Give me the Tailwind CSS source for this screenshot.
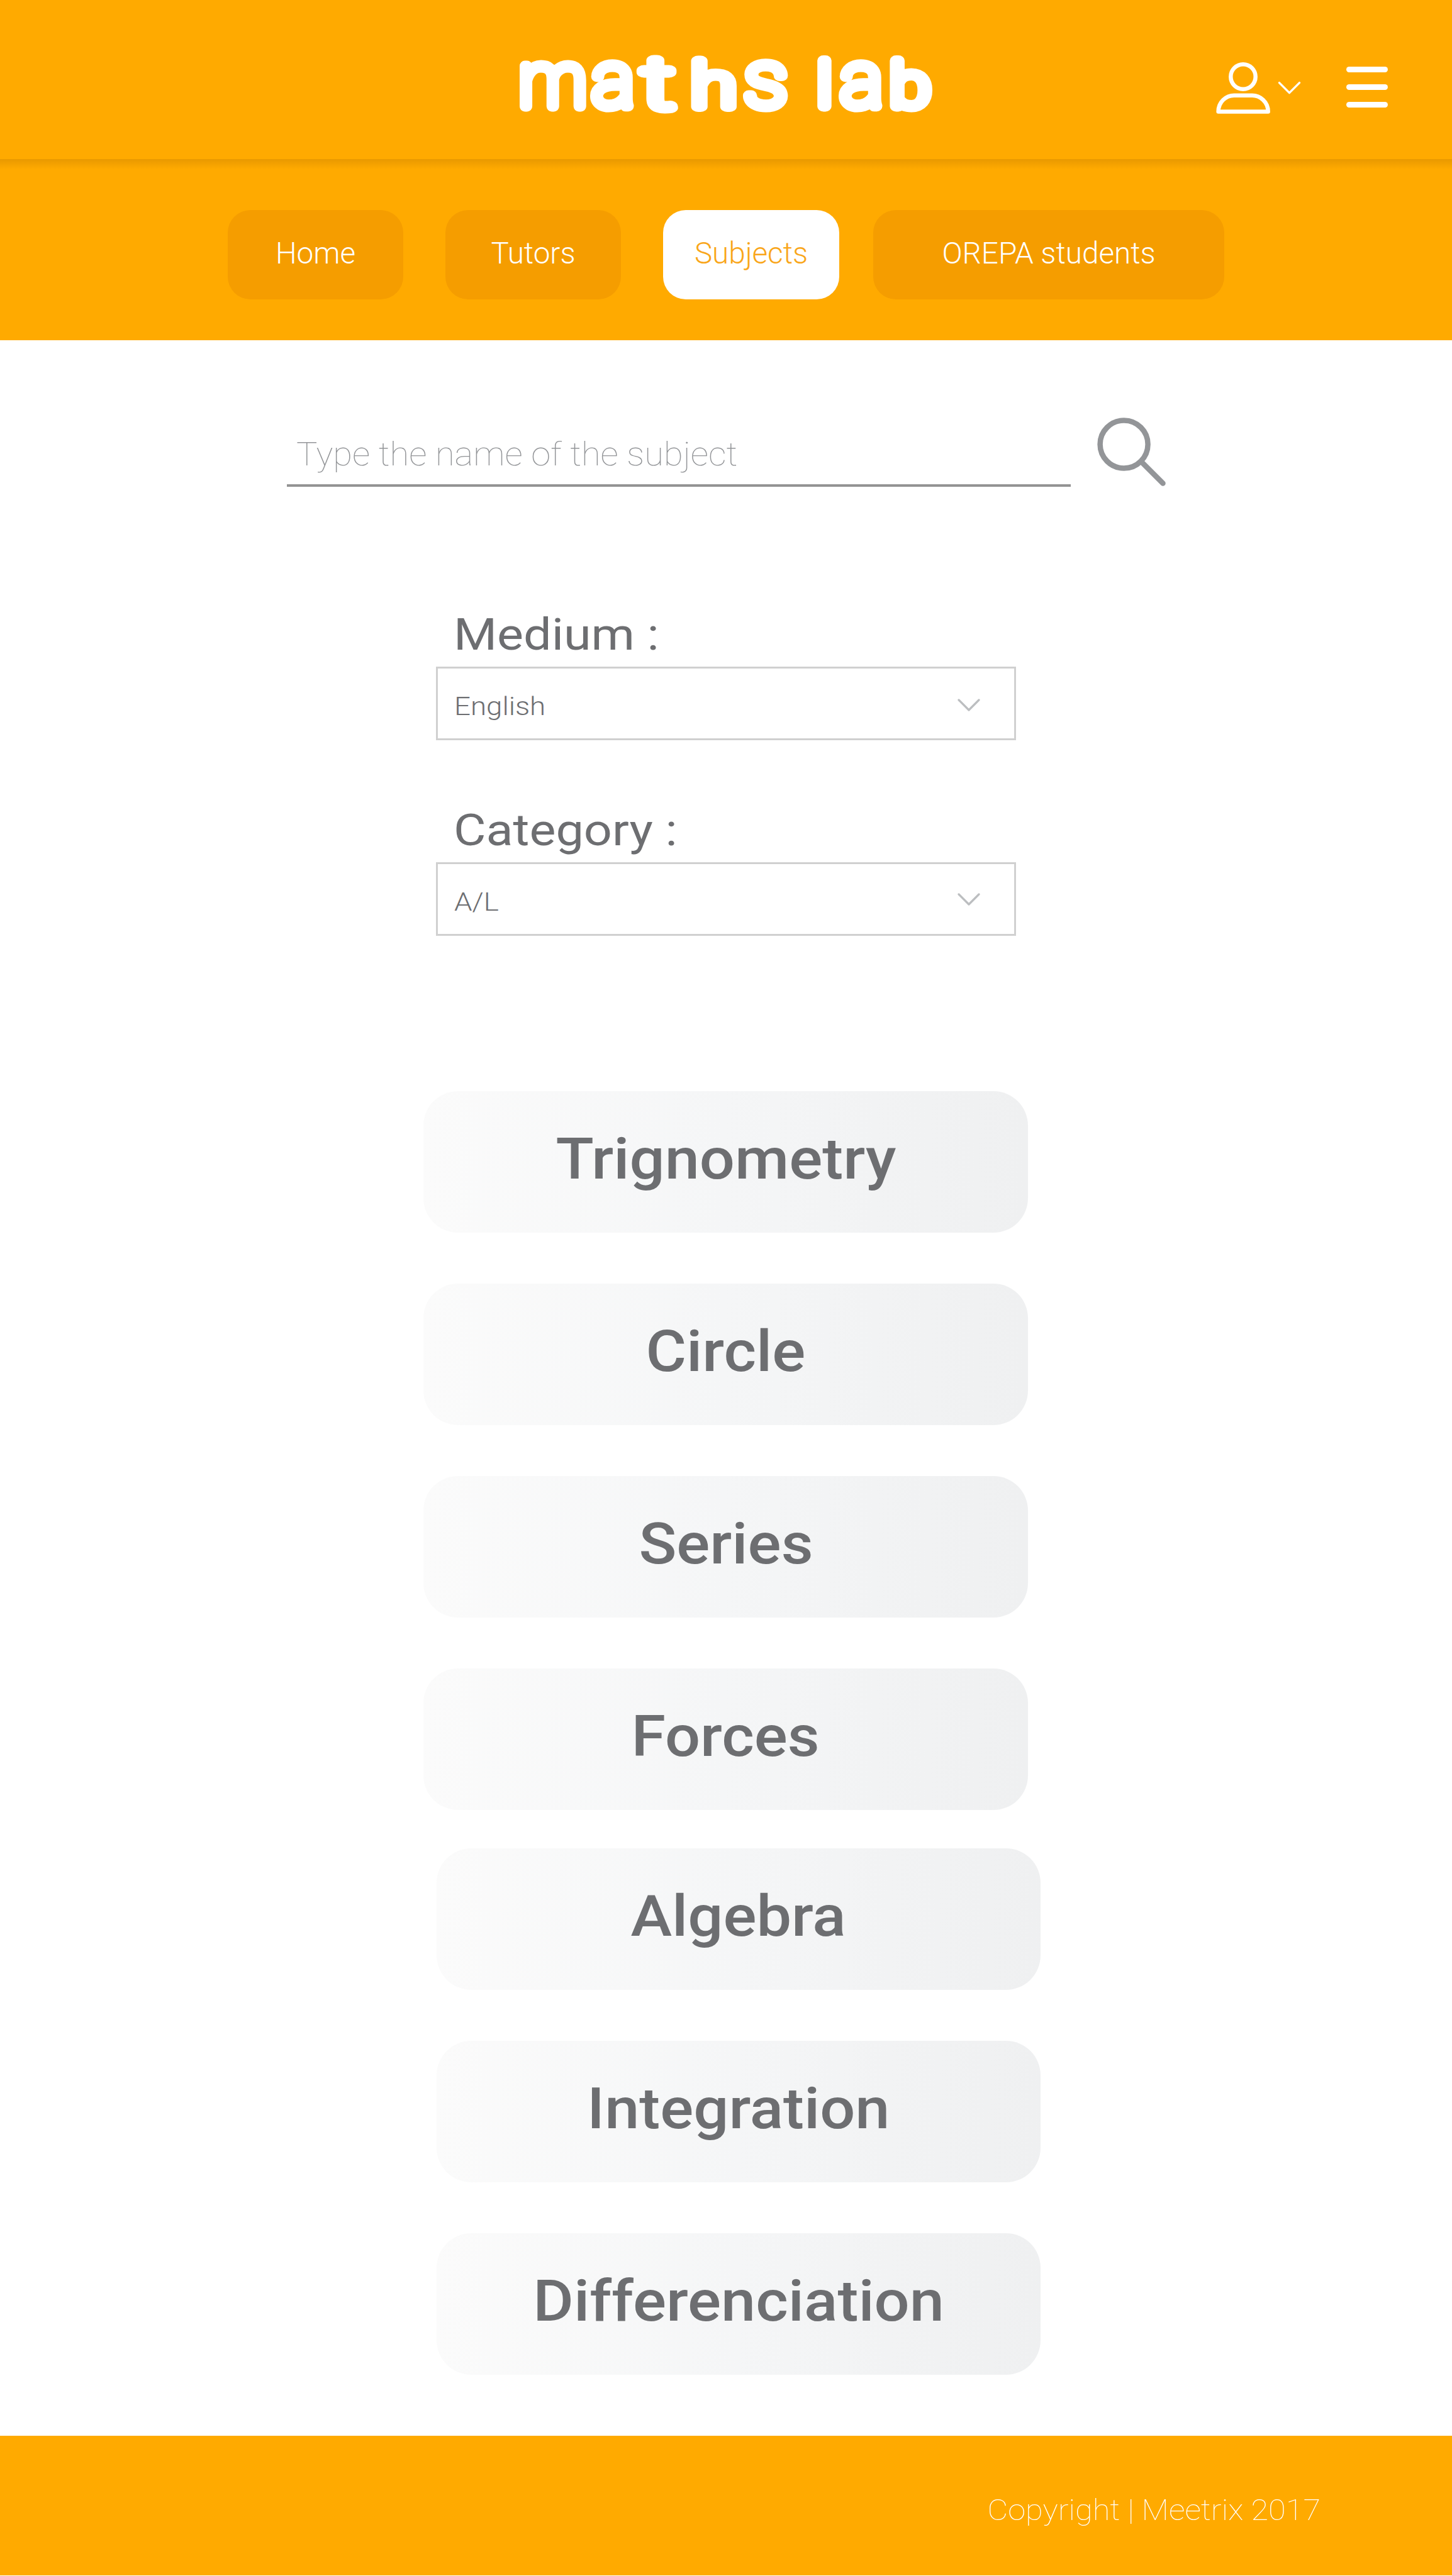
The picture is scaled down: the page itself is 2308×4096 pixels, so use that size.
<!DOCTYPE html>
<html lang="en">
<head>
<meta charset="utf-8">
<title>maths lab</title>
<script src="https://cdn.jsdelivr.net/npm/@tailwindcss/browser@4"></script>
</head>
<body class="bg-white font-['Roboto',sans-serif] text-[#6d6e71]">
<div class="flex h-[4096px] w-[2308px] flex-col overflow-hidden">
  <header class="flex h-[253px] shrink-0 items-start bg-[#ffaa00]">
    <svg class="ml-[816px] h-[253px] w-[690px] overflow-visible" viewBox="816 0 690 253" role="img" aria-label="maths lab">
      <g fill="#fff" stroke="#fff" stroke-width="17" stroke-linejoin="round" stroke-linecap="round" font-family="Roboto" font-weight="100">
        <text transform="translate(825 169) scale(.99 1)" font-size="121">m</text>
        <text transform="translate(941 169) scale(1.03 1)" font-size="123">a</text>
        <text transform="translate(1021 171) scale(1.43 1)" font-size="112">t</text>
        <text transform="translate(1099 170) scale(1.34 1)" font-size="97">h</text>
        <text transform="translate(1183 169) scale(1.1 1)" font-size="125">s</text>
        <text transform="translate(1299 169) scale(1.15 1)" font-size="96">l</text>
        <text transform="translate(1336 169) scale(1.03 1)" font-size="123">a</text>
        <text transform="translate(1415 169) scale(1.2 1)" font-size="97">b</text>
      </g>
    </svg>
    <svg class="ml-[425px] mt-[97px] h-[86px] w-[90px]" viewBox="1931 97 90 86" fill="none" stroke="#fff" stroke-width="6.5" stroke-linejoin="round">
      <circle cx="1976" cy="122" r="19.7"/>
      <path d="M1936.6 177.5C1936.6 162 1949 151.7 1961.500 151.700H1990.500C2003 151.700 2015.700 162 2015.700 177.500Z"/>
    </svg>
    <svg class="ml-[8px] mt-[127px] h-[26px] w-[40px]" viewBox="2029 127 40 26" fill="none" stroke="#fff" stroke-width="3.4" stroke-linecap="round" stroke-linejoin="round"><path d="M2033.500 131.600L2049.500 147.600L2065.500 131.600"/></svg>
    <div class="ml-[71px] mt-[106px] flex w-[66px] flex-col gap-[19px]">
      <span class="h-[9px] rounded-full bg-white"></span>
      <span class="h-[9px] rounded-full bg-white"></span>
      <span class="h-[9px] rounded-full bg-white"></span>
    </div>
  </header>

  <div class="flex h-[288px] shrink-0 flex-col bg-[#ffaa00]">
    <div class="h-[16px] shrink-0 bg-linear-to-b from-[#e99900] to-[#ffaa00]"></div>
    <nav class="ml-[362px] mt-[65px] flex h-[142px] text-[47.600px] font-light text-white">
      <a class="flex w-[279px] items-center justify-center rounded-[36px] bg-[#f59d00] pb-[2px]">Home</a>
      <a class="ml-[67px] flex w-[279px] items-center justify-center rounded-[36px] bg-[#f59d00] pb-[2px]">Tutors</a>
      <a class="ml-[67px] flex w-[280px] items-center justify-center rounded-[36px] bg-white pb-[2px] text-[#f9a61a]">Subjects</a>
      <a class="ml-[54px] flex w-[558px] items-center justify-center rounded-[36px] bg-[#f59d00] pb-[2px]">OREPA students</a>
    </nav>
  </div>

  <main class="flex h-[3332px] shrink-0 flex-col">
    <div class="ml-[456px] mt-[119px] flex h-[116px]">
      <div class="flex h-[114px] w-[1246px] items-end border-b-4 border-[#939393] pb-[17px] pl-[15px] text-[51px] leading-[60px] font-thin text-[#939598]"><span class="origin-left scale-x-[1.1]">Type the name of the subject</span></div>
      <svg class="ml-[38px] h-[116px] w-[116px]" viewBox="1740 660 116 116" fill="none" stroke="#939598" stroke-width="8.500" stroke-linecap="round"><circle cx="1786.600" cy="706.500" r="38"/><path d="M1815.500 735.500L1848.500 768.500"/></svg>
    </div>

    <label class="ml-[721px] mt-[191px] h-[84px] w-[300px] origin-left scale-x-[1.11] text-[71.300px] leading-[84px]">Medium :</label>
    <div class="ml-[693px] mt-[9px] flex h-[117px] w-[922px] items-center justify-between border-[3px] border-[#d0d0d0] pt-[11px] pr-[52px] pl-[26px] text-[41.300px] font-light">
      <span class="origin-left scale-x-[1.106]">English</span>
      <svg class="mb-[7px] h-[24px] w-[40px]" viewBox="0 0 40 24" fill="none" stroke="#bcbec0" stroke-width="3.200" stroke-linecap="round" stroke-linejoin="round"><path d="M4 4L20 20L36 4"/></svg>
    </div>
    <label class="ml-[721px] mt-[101px] h-[84px] w-[340px] origin-left scale-x-[1.11] text-[71.300px] leading-[84px]">Category :</label>
    <div class="ml-[693px] mt-[9px] flex h-[117px] w-[922px] items-center justify-between border-[3px] border-[#d0d0d0] pt-[10px] pr-[52px] pl-[26px] text-[41.300px] font-light">
      <span class="origin-left scale-x-[1.106]">A/L</span>
      <svg class="mb-[10px] h-[24px] w-[40px]" viewBox="0 0 40 24" fill="none" stroke="#bcbec0" stroke-width="3.200" stroke-linecap="round" stroke-linejoin="round"><path d="M4 4L20 20L36 4"/></svg>
    </div>

    <div class="ml-[673px] mt-[247px] flex w-[961px] flex-col gap-[81px] text-[90px] font-medium">
      <div class="flex h-[225px] items-center justify-center rounded-[55px] bg-linear-to-r from-[#fbfbfb] via-[#f5f6f7] to-[#eff0f1] pb-[8px]"><span class="scale-x-[1.1]">Trignometry</span></div>
      <div class="flex h-[225px] items-center justify-center rounded-[55px] bg-linear-to-r from-[#fbfbfb] via-[#f5f6f7] to-[#eff0f1] pb-[8px]"><span class="scale-x-[1.1]">Circle</span></div>
      <div class="flex h-[225px] items-center justify-center rounded-[55px] bg-linear-to-r from-[#fbfbfb] via-[#f5f6f7] to-[#eff0f1] pb-[8px]"><span class="scale-x-[1.1]">Series</span></div>
      <div class="flex h-[225px] items-center justify-center rounded-[55px] bg-linear-to-r from-[#fbfbfb] via-[#f5f6f7] to-[#eff0f1] pb-[8px]"><span class="scale-x-[1.1]">Forces</span></div>
    </div>
    <div class="ml-[694px] mt-[61px] flex w-[960px] flex-col gap-[81px] text-[90px] font-medium">
      <div class="flex h-[225px] items-center justify-center rounded-[55px] bg-linear-to-r from-[#fbfbfb] via-[#f5f6f7] to-[#eff0f1] pb-[8px]"><span class="scale-x-[1.1]">Algebra</span></div>
      <div class="flex h-[225px] items-center justify-center rounded-[55px] bg-linear-to-r from-[#fbfbfb] via-[#f5f6f7] to-[#eff0f1] pb-[8px]"><span class="scale-x-[1.1]">Integration</span></div>
      <div class="flex h-[225px] items-center justify-center rounded-[55px] bg-linear-to-r from-[#fbfbfb] via-[#f5f6f7] to-[#eff0f1] pb-[8px]"><span class="scale-x-[1.1]">Differenciation</span></div>
    </div>
  </main>

  <footer class="flex h-[222px] shrink-0 items-start justify-end bg-[#ffaa00] pt-[88px] pr-[209px] text-[46.600px] leading-[60px] font-thin text-white"><span class="origin-right scale-x-[1.085]">Copyright | Meetrix 2017</span></footer>
</div>
</body>
</html>
